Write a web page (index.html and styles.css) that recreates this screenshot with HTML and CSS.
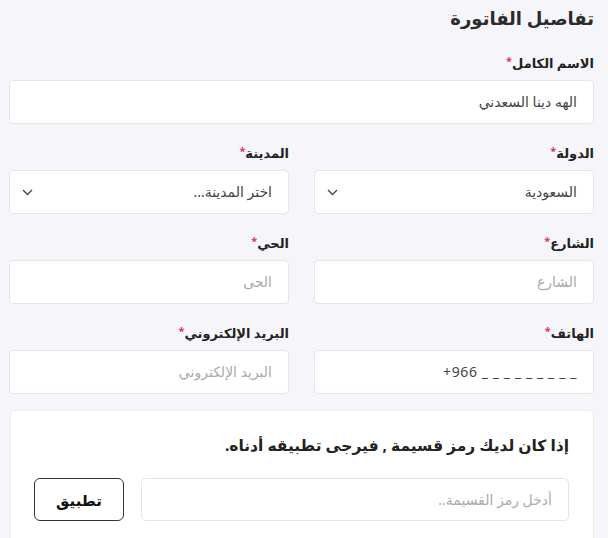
FILE: index.html
```html
<!DOCTYPE html>
<html lang="ar" dir="rtl">
<head>
<meta charset="utf-8">
<title>تفاصيل الفاتورة</title>
<link rel="stylesheet" href="styles.css">
</head>
<body>
<main class="page">
  <h1 class="title">تفاصيل الفاتورة</h1>

  <div class="field">
    <label class="label">الاسم الكامل<span class="req">*</span></label>
    <div class="input"><span class="value">الهه دينا السعدني</span></div>
  </div>

  <div class="row">
    <div class="field">
      <label class="label">الدولة<span class="req">*</span></label>
      <div class="input select"><span class="value">السعودية</span>
        <svg class="chev" width="11" height="7" viewBox="0 0 11 7"><path d="M1 1 L5.5 5.5 L10 1" fill="none" stroke="#444" stroke-width="1.4"/></svg>
      </div>
    </div>
    <div class="field">
      <label class="label">المدينة<span class="req">*</span></label>
      <div class="input select"><span class="value">اختر المدينة...</span>
        <svg class="chev" width="11" height="7" viewBox="0 0 11 7"><path d="M1 1 L5.5 5.5 L10 1" fill="none" stroke="#444" stroke-width="1.4"/></svg>
      </div>
    </div>
  </div>

  <div class="row">
    <div class="field">
      <label class="label">الشارع<span class="req">*</span></label>
      <div class="input"><span class="ph">الشارع</span></div>
    </div>
    <div class="field">
      <label class="label">الحي<span class="req">*</span></label>
      <div class="input"><span class="ph">الحى</span></div>
    </div>
  </div>

  <div class="row">
    <div class="field">
      <label class="label">الهاتف<span class="req">*</span></label>
      <div class="input"><span class="value phone" dir="ltr">+966 _ _ _ _ _ _ _ _ _</span></div>
    </div>
    <div class="field">
      <label class="label">البريد الإلكتروني<span class="req">*</span></label>
      <div class="input"><span class="ph">البريد الإلكتروني</span></div>
    </div>
  </div>

  <section class="card">
    <p class="card-text">إذا كان لديك رمز قسيمة , فيرجى تطبيقه أدناه.</p>
    <div class="coupon">
      <div class="input coupon-input"><span class="ph">أدخل رمز القسيمة..</span></div>
      <button class="btn">تطبيق</button>
    </div>
  </section>
</main>
</body>
</html>
```

FILE: styles.css
```css
* { box-sizing: border-box; }
html, body {
  margin: 0;
  background: #f6f6fa;
}
body {
  font-family: "Noto Sans", "DejaVu Sans", sans-serif;
  color: #222;
  width: 608px;
  height: 538px;
  overflow: hidden;
}
.page {
  padding: 0 14px 0 9px;
  display: flex;
  flex-direction: column;
}
.title {
  margin: 0 0 17px;
  height: 36px;
  font-size: 18px;
  line-height: 36px;
  font-weight: 600;
  color: #2b2b2b;
  text-align: right;
}
.row {
  display: grid;
  grid-template-columns: 1fr 1fr;
  column-gap: 25px;
  margin-top: 19px;
}
.field {
  display: flex;
  flex-direction: column;
}
.label {
  display: block;
  height: 20px;
  font-size: 13px;
  line-height: 20px;
  font-weight: 700;
  color: #222;
  margin-bottom: 7px;
}
.req {
  color: #d6336c;
  font-size: 11px;
  vertical-align: top;
  line-height: 16px;
}
.input {
  height: 44px;
  background: #fff;
  border: 1px solid #e4e4ea;
  border-radius: 4px;
  display: flex;
  align-items: center;
  padding: 0 16px;
  font-size: 14px;
  line-height: 20px;
}
.value { color: #444; }
.ph { color: #aaa; }
.phone { letter-spacing: 0.6px; }
.select {
  justify-content: space-between;
  padding-left: 12px;
}
.chev { display: block; }
.card {
  margin-top: 16px;
  margin-left: 1px;
  background: #fff;
  border: 1px solid #ececf1;
  border-radius: 5px;
  padding: 23px 24px 30px 23px;
}
.card-text {
  margin: 0 0 22px;
  height: 22px;
  font-size: 15.5px;
  line-height: 22px;
  font-weight: 700;
  color: #222;
}
.coupon {
  display: flex;
  gap: 17px;
}
.coupon-input {
  flex: 1;
  height: 43px;
  border-radius: 5px;
}
.btn {
  width: 90px;
  height: 43px;
  background: #fff;
  border: 1px solid #333;
  border-radius: 6px;
  font-family: inherit;
  font-size: 15px;
  font-weight: 700;
  color: #111;
  padding: 0;
}
```
